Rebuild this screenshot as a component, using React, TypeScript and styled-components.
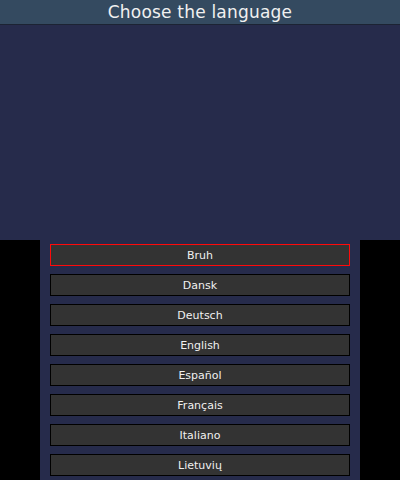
import styled, { createGlobalStyle } from 'styled-components';

const languages = ['Bruh', 'Dansk', 'Deutsch', 'English', 'Español', 'Français', 'Italiano', 'Lietuvių'];

const GlobalStyle = createGlobalStyle`
  html, body {
    margin: 0;
    padding: 0;
    background: #000;
    overflow: hidden;
  }
`;

const Frame = styled.div`
  width: 400px;
  height: 480px;
  display: flex;
  flex-direction: column;
  font-family: 'DejaVu Sans', 'Liberation Sans', sans-serif;
  color: #f0f0f0;
`;

const TopScreen = styled.div`
  height: 240px;
  display: flex;
  flex-direction: column;
  background: #262b4b;
`;

const Header = styled.div`
  height: 24px;
  background: #344a60;
  border-bottom: 1px solid #1c2333;
  display: flex;
  align-items: center;
  justify-content: center;
  font-size: 17px;
  letter-spacing: 0.2px;
`;

const BottomRow = styled.div`
  height: 240px;
  display: flex;
  justify-content: center;
  background: #000;
`;

const BottomScreen = styled.div`
  width: 320px;
  background: #262b4b;
  display: flex;
  flex-direction: column;
  gap: 8px;
  padding: 4px 10px 0;
  box-sizing: border-box;
  overflow: hidden;
`;

const LangButton = styled.div<{ $selected: boolean }>`
  flex: none;
  height: 22px;
  box-sizing: border-box;
  background: #333333;
  border: 1px solid ${({ $selected }) => ($selected ? '#ff0a0a' : '#000')};
  display: flex;
  align-items: center;
  justify-content: center;
  font-size: 11px;
`;

export default function App() {
  return (
    <>
      <GlobalStyle />
      <Frame>
        <TopScreen>
          <Header>Choose the language</Header>
        </TopScreen>
        <BottomRow>
          <BottomScreen>
            {languages.map((lang, i) => (
              <LangButton key={lang} $selected={i === 0}>
                {lang}
              </LangButton>
            ))}
          </BottomScreen>
        </BottomRow>
      </Frame>
    </>
  );
}
